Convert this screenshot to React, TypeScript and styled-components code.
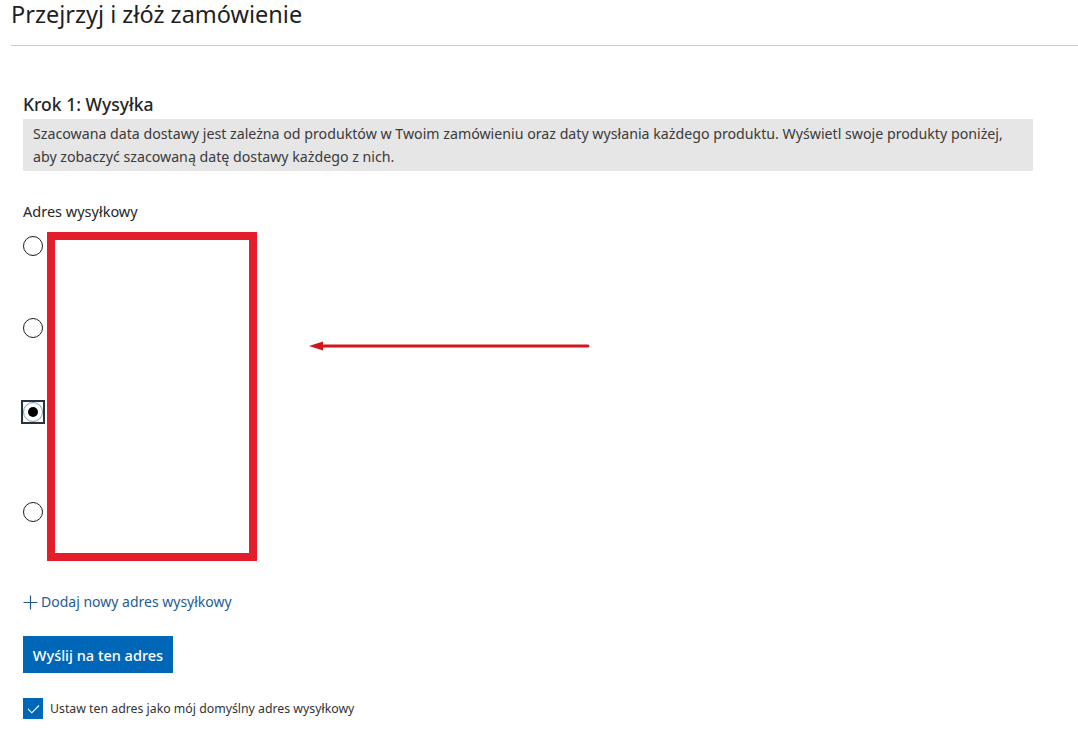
import React from "react";
import styled, { createGlobalStyle } from "styled-components";

const GlobalStyle = createGlobalStyle`
  body {
    margin: 0;
    background: #fff;
    font-family: "Segoe UI", "Noto Sans", "Open Sans", sans-serif;
    color: #2b2b2b;
  }
`;

const Page = styled.div`
  padding: 0 0 0 11px;
`;

const Title = styled.h1`
  margin: 0;
  font-size: 23.5px;
  font-weight: 400;
  line-height: 28px;
  color: #1f1f1f;
`;

const Divider = styled.hr`
  margin: 17px 0 0 0;
  border: none;
  border-top: 1px solid #cfcfcf;
`;

const Content = styled.div`
  padding: 46px 0 0 12px;
`;

const StepTitle = styled.h2`
  margin: 0;
  font-size: 17.5px;
  font-weight: 500;
  line-height: 24px;
  color: #262626;
`;

const Notice = styled.div`
  margin-top: 3px;
  width: 1010px;
  box-sizing: border-box;
  background: #e6e6e6;
  padding: 3px 10px 3px 10px;
  font-size: 14.2px;
  line-height: 23px;
  color: #3a3a3a;
`;

const FieldLabel = styled.div`
  margin-top: 30px;
  font-size: 14.5px;
  line-height: 20px;
  color: #262626;
`;

const AddressArea = styled.div`
  display: flex;
  align-items: flex-start;
  margin-top: 11px;
`;

const RadioColumn = styled.div`
  display: flex;
  flex-direction: column;
  padding-top: 4px;
`;

const Option = styled.div<{ $h: number }>`
  height: ${(p) => p.$h}px;
`;

const FocusRing = styled.span<{ $active?: boolean }>`
  display: inline-flex;
  outline: ${(p) => (p.$active ? "2px solid #27323c" : "none")};
`;

const Radio = styled.span<{ $checked?: boolean }>`
  width: 20px;
  height: 20px;
  box-sizing: border-box;
  border-radius: 50%;
  border: 1px solid ${(p) => (p.$checked ? "#7f9db3" : "#1e1e1e")};
  display: flex;
  align-items: center;
  justify-content: center;
  &::after {
    content: "";
    display: ${(p) => (p.$checked ? "block" : "none")};
    width: 10px;
    height: 10px;
    border-radius: 50%;
    background: #000;
  }
`;

const RedBox = styled.div`
  margin-left: 4px;
  width: 210px;
  height: 329px;
  box-sizing: border-box;
  border: 8px solid #e31e2a;
`;

const Arrow = styled.svg`
  margin-left: 52px;
  margin-top: 108px;
`;

const AddLink = styled.a`
  display: flex;
  align-items: center;
  gap: 3px;
  margin-top: 31px;
  font-size: 14px;
  line-height: 20px;
  color: #1f5c92;
  text-decoration: none;
`;

const PlusIcon = styled.svg`
  flex: none;
`;

const PrimaryButton = styled.button`
  margin-top: 24px;
  width: 150px;
  height: 37px;
  border: none;
  background: #0067b8;
  color: #fff;
  font-family: inherit;
  font-size: 14.5px;
  font-weight: 500;
  padding: 0;
`;

const CheckRow = styled.label`
  display: flex;
  align-items: center;
  gap: 7px;
  margin-top: 25px;
  font-size: 12.3px;
  color: #333;
`;

const CheckBox = styled.span`
  width: 20px;
  height: 21px;
  background: #0067b8;
  display: flex;
  align-items: center;
  justify-content: center;
`;

const options = [
  { h: 82, checked: false },
  { h: 82, checked: false },
  { h: 102, checked: true },
  { h: 40, checked: false },
];

export default function App() {
  return (
    <>
      <GlobalStyle />
      <Page>
        <Title>Przejrzyj i złóż zamówienie</Title>
        <Divider />
        <Content>
          <StepTitle>Krok 1: Wysyłka</StepTitle>
          <Notice>
            Szacowana data dostawy jest zależna od produktów w Twoim zamówieniu oraz daty wysłania
            każdego produktu. Wyświetl swoje produkty poniżej, aby zobaczyć szacowaną datę dostawy
            każdego z nich.
          </Notice>
          <FieldLabel>Adres wysyłkowy</FieldLabel>
          <AddressArea>
            <RadioColumn>
              {options.map((o, i) => (
                <Option key={i} $h={o.h}>
                  <FocusRing $active={o.checked}>
                    <Radio $checked={o.checked} />
                  </FocusRing>
                </Option>
              ))}
            </RadioColumn>
            <RedBox />
            <Arrow width="281" height="12" viewBox="0 0 281 12">
              <line x1="10" y1="6" x2="279" y2="6" stroke="#d2161d" strokeWidth="3" strokeLinecap="round" />
              <polygon points="0,6 14,1.5 14,10.5" fill="#d2161d" />
            </Arrow>
          </AddressArea>
          <AddLink href="#">
            <PlusIcon width="15" height="15" viewBox="0 0 15 15">
              <path d="M7.5 0.5v14M0.5 7.5h14" stroke="#1f5c92" strokeWidth="1.2" fill="none" />
            </PlusIcon>
            Dodaj nowy adres wysyłkowy
          </AddLink>
          <PrimaryButton>Wyślij na ten adres</PrimaryButton>
          <CheckRow>
            <CheckBox>
              <svg width="13" height="10" viewBox="0 0 13 10">
                <path d="M1 5l3.8 3.8L12 1.5" stroke="#fff" strokeWidth="1.1" fill="none" />
              </svg>
            </CheckBox>
            Ustaw ten adres jako mój domyślny adres wysyłkowy
          </CheckRow>
        </Content>
      </Page>
    </>
  );
}
